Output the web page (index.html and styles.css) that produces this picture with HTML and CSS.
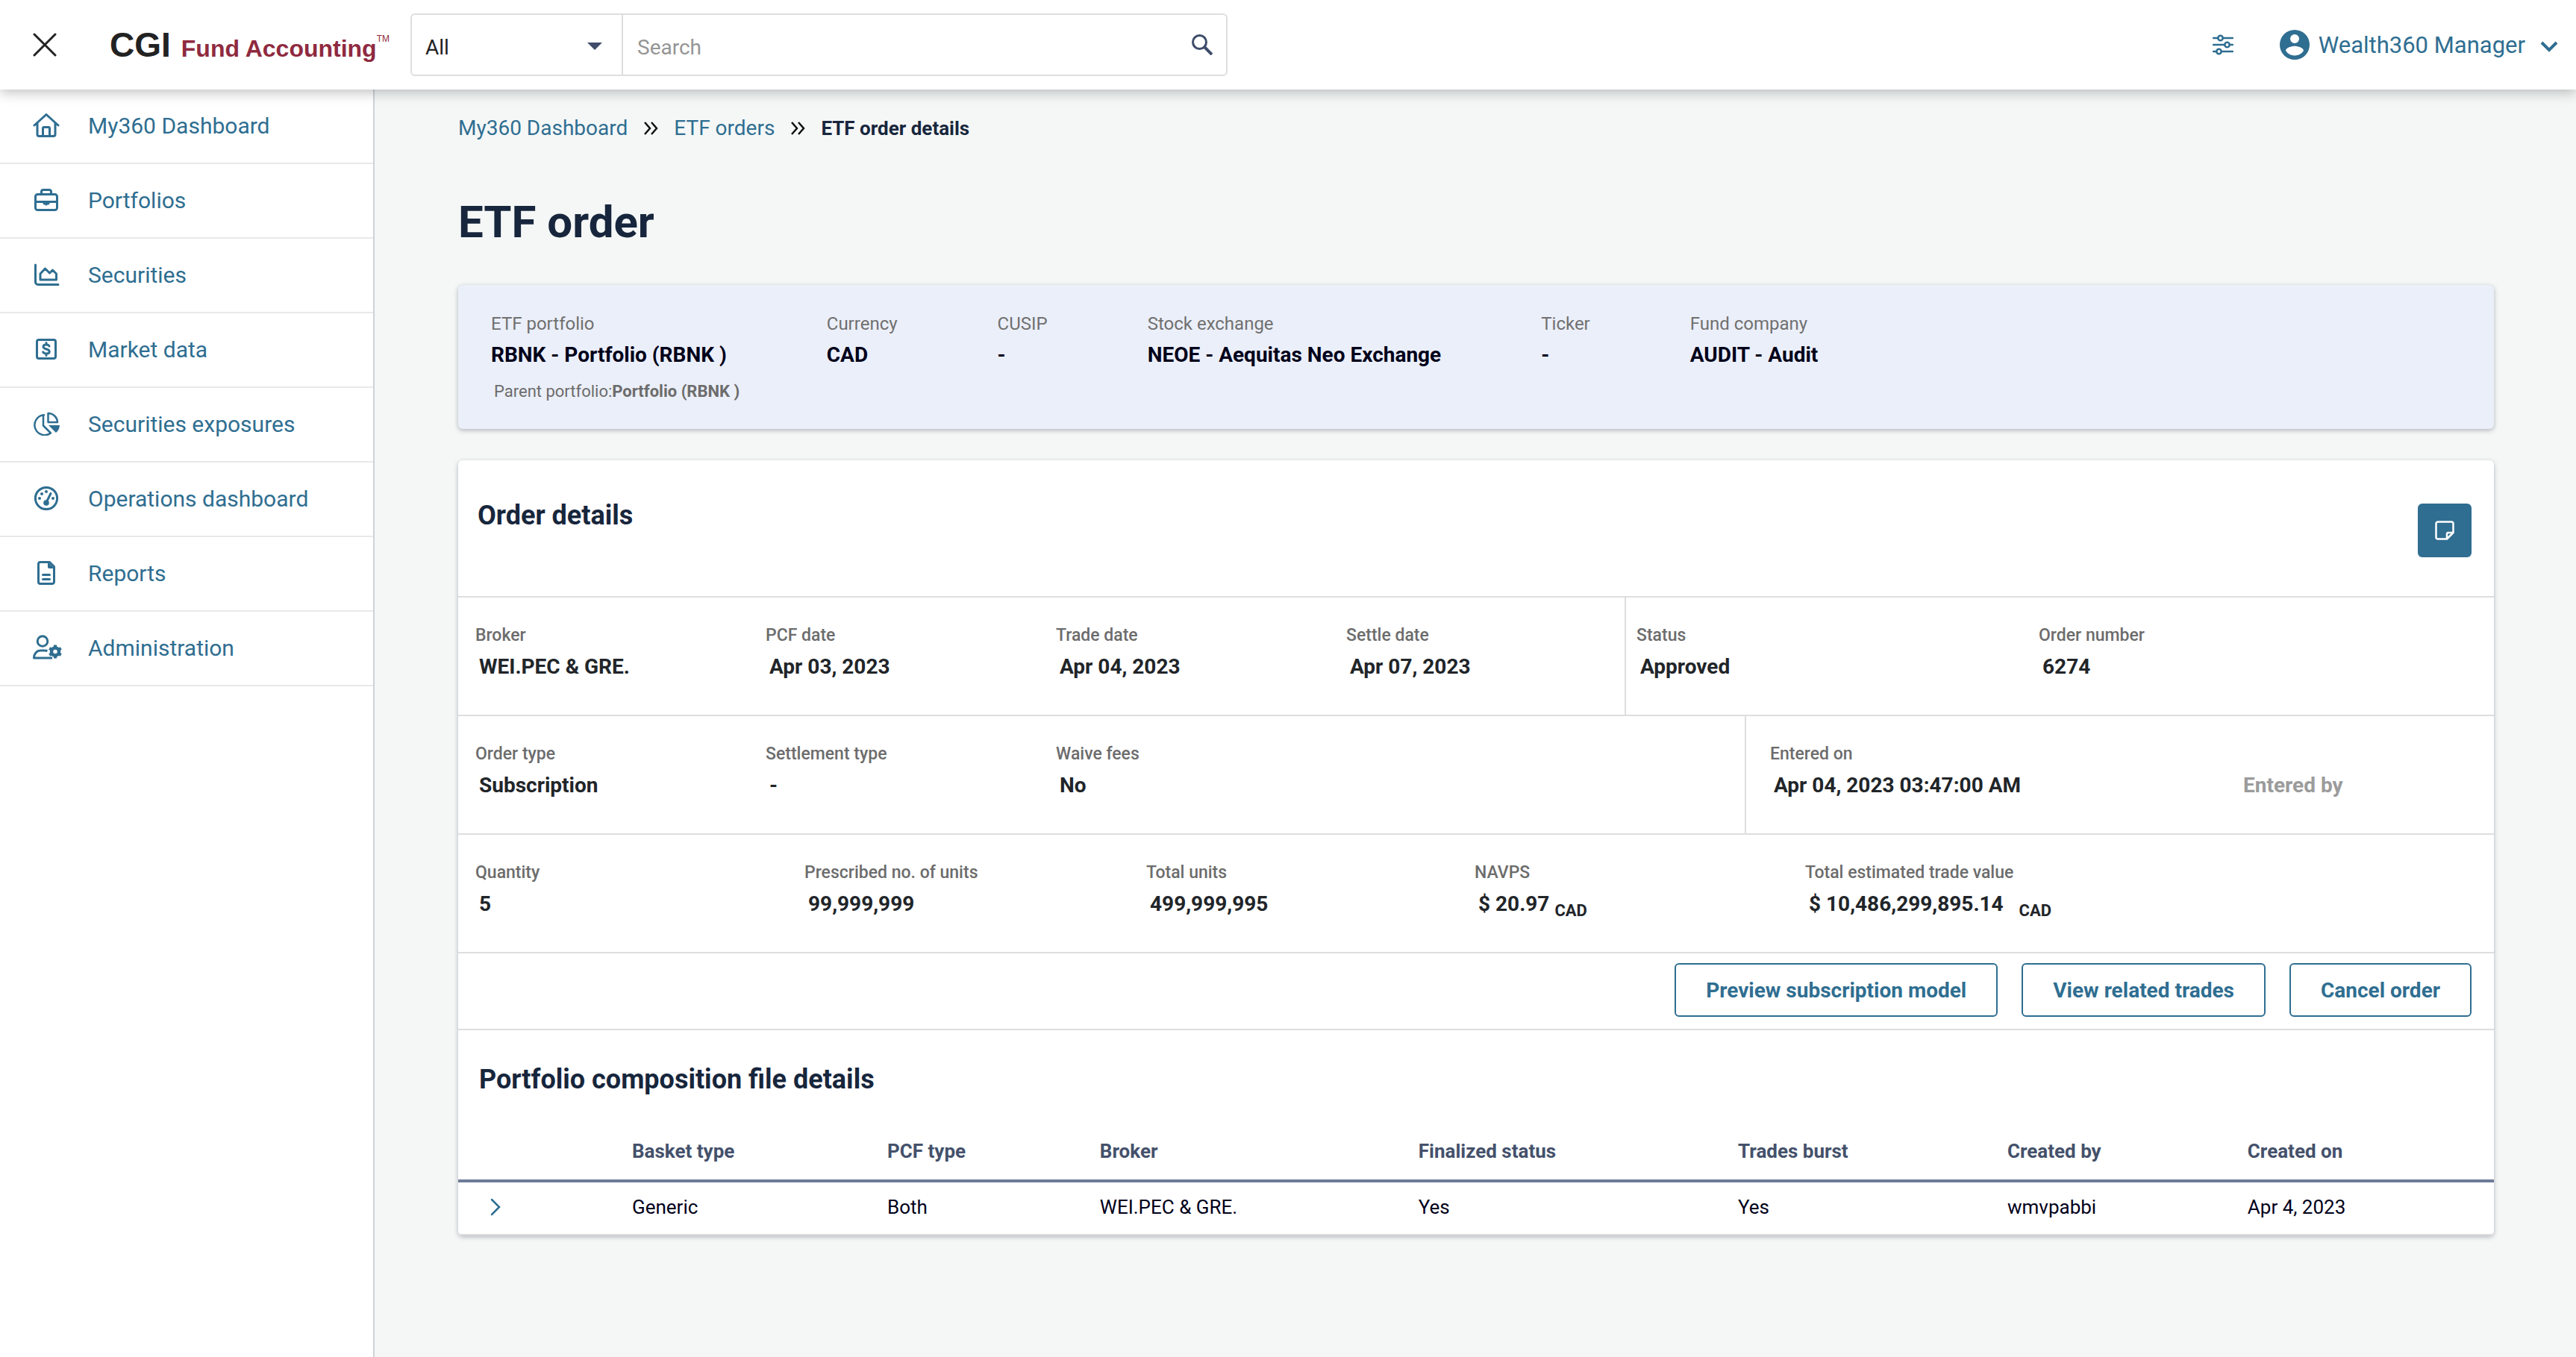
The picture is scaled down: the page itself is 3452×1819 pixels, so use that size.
FILE: index.html
```html
<!DOCTYPE html>
<html lang="en">
<head>
<meta charset="utf-8">
<title>ETF order details</title>
<link rel="stylesheet" href="styles.css">
</head>
<body>
<header class="topbar">
  <button class="icon-btn close" aria-label="Close menu">
    <svg width="32" height="32" viewBox="0 0 32 32"><path d="M2 2 30 30M30 2 2 30" stroke="#222" stroke-width="3" stroke-linecap="round"/></svg>
  </button>
  <a class="logo" href="#"><span class="logo-mark">CGI</span><span class="logo-name">Fund Accounting</span><span class="logo-tm">TM</span></a>
  <form class="search">
    <label class="scope">
      <select aria-label="Search scope"><option>All</option></select>
      <svg width="20" height="10" viewBox="0 0 20 10"><path d="M0 0h20L10 10z" fill="#3f4d6b"/></svg>
    </label>
    <input type="text" placeholder="Search" aria-label="Search">
    <button class="icon-btn" type="button" aria-label="Run search">
      <svg width="28" height="28" viewBox="0 0 28 28" fill="none" stroke="#3f4d6b"><circle cx="10.500" cy="10.500" r="9" stroke-width="3"/><path d="M17 17l10 10" stroke-width="4"/></svg>
    </button>
  </form>
  <button class="icon-btn settings" aria-label="Settings">
    <svg width="28" height="28" viewBox="0 0 28 28" fill="none" stroke="#2f6e91" stroke-width="2.500" stroke-linecap="round"><path d="M1 5h6M14 5h13M1 14h15M23 14h4M1 23h4M12 23h15"/><circle cx="10.500" cy="5" r="3.200"/><circle cx="19.500" cy="14" r="3.200"/><circle cx="8.500" cy="23" r="3.200"/></svg>
  </button>
  <button class="icon-btn user">
    <svg width="40" height="40" viewBox="0 0 24 24" fill="#2f6e91"><path d="M12 0a12 12 0 1 0 0 24 12 12 0 0 0 0-24zm0 3.600a3.600 3.600 0 1 1 0 7.200 3.600 3.600 0 0 1 0-7.200zm0 17.040a8.640 8.640 0 0 1-7.200-3.860c.04-2.390 4.800-3.700 7.200-3.700 2.390 0 7.160 1.310 7.200 3.700A8.640 8.640 0 0 1 12 20.640z"/></svg>
    <span>Wealth360 Manager</span>
    <svg width="24" height="20" viewBox="0 0 24 20" fill="none" stroke="#2f6e91" stroke-width="4"><path d="M2 7l10 10L22 7"/></svg>
  </button>
</header>
<div class="layout">
  <nav class="sidebar">
    <a href="#"><svg viewBox="0 0 36 32"><path d="M2 16 18 1.500 34 16M6 13v15a2.500 2.500 0 0 0 2.500 2.500h19A2.500 2.500 0 0 0 30 28V13M13.500 30V20a1.500 1.500 0 0 1 1.500-1.500h6a1.500 1.500 0 0 1 1.500 1.500v10"/></svg>My360 Dashboard</a>
    <a href="#"><svg viewBox="0 0 36 32"><rect x="3.500" y="8.500" width="29" height="21" rx="3"/><path d="M11.500 8V5a2.500 2.500 0 0 1 2.500-2.500h8A2.500 2.500 0 0 1 24.500 5v3M4 18.500h28M18 19v3" /><path d="M15.500 20.500h5" stroke-width="4"/></svg>Portfolios</a>
    <a href="#"><svg viewBox="0 0 36 32"><path d="M3.500 3v23a3.500 3.500 0 0 0 3.500 3.500h27M10 23v-8l6.500-7 6 6 4-4 5 5v8z"/></svg>Securities</a>
    <a href="#"><svg viewBox="0 0 36 32"><rect x="5.500" y="3.500" width="25" height="25" rx="2.500"/><path d="M22 12c-.6-1.500-2-2-4-2-2.400 0-4 1-4 2.800 0 4.200 8.200 2.200 8.200 6.400 0 1.800-1.700 2.800-4.200 2.800-2.200 0-3.700-.7-4.300-2.200M18 7.500v2.500M18 22v2.500"/></svg>Market data</a>
    <a href="#"><svg viewBox="0 0 36 32"><path d="M15 4.200A13.500 13.500 0 1 0 24 28.500L14 18.500V4.200zM20.500 2v12H33A12.500 12.500 0 0 0 20.500 2z" stroke-width="2.500"/><path d="M21 18h15a14 14 0 0 1-5 10z" fill="#2f6e91" stroke="none"/></svg>Securities exposures</a>
    <a href="#"><svg viewBox="0 0 36 32"><circle cx="18" cy="16" r="14.600"/><path d="M18 21.500 24 9.500"/><g fill="#2f6e91" stroke="none"><circle cx="18" cy="22" r="3.800"/><circle cx="9" cy="16" r="2"/><circle cx="12" cy="10" r="2"/><circle cx="18" cy="7" r="2"/><circle cx="27" cy="16" r="2"/></g></svg>Operations dashboard</a>
    <a href="#"><svg viewBox="0 0 36 32"><path d="M9.500 1.500h13l6 6v20.500a2.500 2.500 0 0 1-2.500 2.500H10A2.500 2.500 0 0 1 7.500 28V4a2.500 2.500 0 0 1 2.500-2.500zM13.500 18.500h9M13.500 24.500h9"/><path d="M20 1v7a2 2 0 0 0 2 2h7z" fill="#2f6e91" stroke="none"/></svg>Reports</a>
    <a href="#"><svg class="wide" viewBox="0 0 42 34"><circle cx="13" cy="8.500" r="6.800"/><path d="M26 31H1.500c0-5.500 3.500-10 9-10H16c1.500 0 2.500.2 3.500.6"/><circle cx="30" cy="22.500" r="5" stroke-width="4.500"/><path d="M30 13.500v18M22.200 18l15.600 9M37.800 18l-15.600 9" stroke-width="4" stroke-dasharray="3 12"/></svg>Administration</a>
  </nav>
  <main class="content">
    <nav class="crumbs" aria-label="Breadcrumb">
      <a href="#">My360 Dashboard</a>
      <svg width="20" height="18" viewBox="0 0 20 18"><path d="M2 1l7 8-7 8M11 1l7 8-7 8"/></svg>
      <a href="#">ETF orders</a>
      <svg width="20" height="18" viewBox="0 0 20 18"><path d="M2 1l7 8-7 8M11 1l7 8-7 8"/></svg>
      <strong>ETF order details</strong>
    </nav>
    <h1>ETF order</h1>
    <section class="summary">
      <dl class="summary-list">
        <div><dt>ETF portfolio</dt><dd>RBNK - Portfolio (RBNK )</dd></div>
        <div><dt>Currency</dt><dd>CAD</dd></div>
        <div><dt>CUSIP</dt><dd>-</dd></div>
        <div><dt>Stock exchange</dt><dd>NEOE - Aequitas Neo Exchange</dd></div>
        <div><dt>Ticker</dt><dd>-</dd></div>
        <div><dt>Fund company</dt><dd>AUDIT - Audit</dd></div>
      </dl>
      <p class="parent">Parent portfolio:<b>Portfolio (RBNK )</b></p>
    </section>
    <section class="card">
      <div class="card-head">
        <h2>Order details</h2>
        <button class="note" aria-label="Notes"><svg width="26" height="26" viewBox="0 0 26 26" fill="none" stroke="#fff" stroke-width="2.500" stroke-linejoin="round"><path d="M4 1.500h18A2.500 2.500 0 0 1 24.500 4v12l-8.500 8.500H4A2.500 2.500 0 0 1 1.500 22V4A2.500 2.500 0 0 1 4 1.500zM16 24v-6a2 2 0 0 1 2-2h6"/></svg></button>
      </div>
      <div class="row row-dates">
        <dl class="fields">
          <div><dt>Broker</dt><dd>WEI.PEC &amp; GRE.</dd></div>
          <div><dt>PCF date</dt><dd>Apr 03, 2023</dd></div>
          <div><dt>Trade date</dt><dd>Apr 04, 2023</dd></div>
          <div><dt>Settle date</dt><dd>Apr 07, 2023</dd></div>
        </dl>
        <dl class="fields side">
          <div><dt>Status</dt><dd>Approved</dd></div>
          <div><dt>Order number</dt><dd>6274</dd></div>
        </dl>
      </div>
      <div class="row row-type">
        <dl class="fields">
          <div><dt>Order type</dt><dd>Subscription</dd></div>
          <div><dt>Settlement type</dt><dd>-</dd></div>
          <div><dt>Waive fees</dt><dd>No</dd></div>
        </dl>
        <dl class="fields side">
          <div><dt>Entered on</dt><dd>Apr 04, 2023 03:47:00 AM</dd></div>
          <div class="empty"><dt>Entered by</dt></div>
        </dl>
      </div>
      <div class="row">
        <dl class="fields amounts">
          <div><dt>Quantity</dt><dd>5</dd></div>
          <div><dt>Prescribed no. of units</dt><dd>99,999,999</dd></div>
          <div><dt>Total units</dt><dd>499,999,995</dd></div>
          <div><dt>NAVPS</dt><dd>$ 20.97 <sub>CAD</sub></dd></div>
          <div><dt>Total estimated trade value</dt><dd>$ 10,486,299,895.14 &nbsp; <sub>CAD</sub></dd></div>
        </dl>
      </div>
      <div class="actions">
        <button>Preview subscription model</button>
        <button>View related trades</button>
        <button>Cancel order</button>
      </div>
      <h2 class="table-title">Portfolio composition file details</h2>
      <table>
        <colgroup><col class="c0"><col class="c1"><col class="c2"><col class="c3"><col class="c4"><col class="c5"><col class="c6"><col class="c7"></colgroup>
        <thead><tr><th></th><th>Basket type</th><th>PCF type</th><th>Broker</th><th>Finalized status</th><th>Trades burst</th><th>Created by</th><th>Created on</th></tr></thead>
        <tbody><tr>
          <td class="toggle"><button class="icon-btn" aria-label="Expand row"><svg width="14" height="24" viewBox="0 0 14 24" fill="none" stroke="#2f6e91" stroke-width="2.500" stroke-linecap="round"><path d="M2 2l10 10L2 22"/></svg></button></td>
          <td>Generic</td><td>Both</td><td>WEI.PEC &amp; GRE.</td><td>Yes</td><td>Yes</td><td>wmvpabbi</td><td>Apr 4, 2023</td>
        </tr></tbody>
      </table>
    </section>
  </main>
</div>
</body>
</html>
```
FILE: styles.css
```css
* { box-sizing: border-box; }
body {
  margin: 0;
  min-height: 100vh;
  display: flex;
  flex-direction: column;
  background: #f5f7f7;
  color: #212529;
  font-family: Roboto, "Liberation Sans", sans-serif;
  font-size: 28px;
}
a { color: #2f6e91; text-decoration: none; }
button, input, select { font: inherit; }
dl, dd, p, h1, h2 { margin: 0; }
svg { display: block; flex: none; }
.icon-btn { border: 0; background: none; padding: 0; color: #2f6e91; display: flex; align-items: center; }

/* Top bar */
.topbar {
  position: relative;
  z-index: 1;
  display: flex;
  align-items: center;
  height: 120px;
  padding: 0 24px 0 44px;
  background: #fff;
  box-shadow: 0 4px 16px rgba(0, 0, 0, .25);
}
.logo {
  display: flex;
  align-items: baseline;
  width: 403px;
  margin-left: 71px;
  font-family: "Liberation Sans", Arial, sans-serif;
  color: #8f2a40;
  white-space: nowrap;
}
.logo-mark { font-size: 46px; font-weight: 700; color: #222; margin-right: 14px; }
.logo-name { font-size: 32px; font-weight: 700; }
.logo-tm { font-size: 12px; line-height: 14px; align-self: flex-start; margin-top: 12px; }
.search {
  display: flex;
  align-items: center;
  width: 1095px;
  height: 84px;
  padding-right: 18px;
  border: 2px solid #dedede;
  border-radius: 6px;
}
.scope {
  display: flex;
  align-items: center;
  align-self: stretch;
  width: 283px;
  padding: 4px 26px 0 0;
  border-right: 2px solid #dedede;
}
.scope select { flex: 1; appearance: none; border: 0; background: none; padding: 2px 0 0 18px; color: #222; }
.search input { flex: 1; border: 0; background: none; outline: 0; padding: 6px 0 0 19px; }
.search input::placeholder { color: #959595; }
.settings { margin-left: auto; }
.user { margin-left: 62px; gap: 12px; font-size: 31px; }
.user span { margin-right: 8px; }

.layout { display: flex; flex: 1; }

/* Side menu */
.sidebar { width: 502px; border-right: 2px solid #cfd3d6; background: #fff; }
.sidebar a {
  display: flex;
  align-items: center;
  gap: 38px;
  height: 100px;
  padding: 0 0 2px 44px;
  border-bottom: 2px solid #e9e9e9;
  font-size: 30px;
}
.sidebar svg { width: 36px; height: 32px; fill: none; stroke: #2f6e91; stroke-width: 3; stroke-linejoin: round; stroke-linecap: round; }
.sidebar .wide { width: 42px; height: 34px; margin-right: -6px; stroke-linecap: butt; }

/* Page content */
.content { flex: 1; padding: 32px 110px 0 112px; }
.crumbs { display: flex; align-items: center; gap: 21px; line-height: 40px; }
.crumbs svg { fill: none; stroke: #111; stroke-width: 2.5; }
.crumbs strong { font-size: 26px; font-weight: 700; color: #17263c; }
h1 { margin-top: 66px; font-size: 60px; line-height: 80px; font-weight: 700; color: #17263c; }
h2 { font-size: 36px; line-height: 44px; font-weight: 700; color: #17263c; }

.summary, .card { border-radius: 6px; box-shadow: 0 2px 6px rgba(20, 30, 50, .3); }
.summary { margin-top: 44px; padding: 36px 44px 34px; background: #ebeff9; color: #00001a; }
.summary-list { display: flex; gap: 134px; }
.summary dt { font-size: 24px; line-height: 32px; color: #707070; }
.summary dd { line-height: 44px; font-weight: 700; padding-top: 4px; }
.parent { padding: 11px 4px 0; font-size: 22px; line-height: 32px; color: #6c6c6c; }

.card { margin-top: 42px; background: #fff; }
.card-head { display: flex; justify-content: space-between; align-items: flex-start; height: 182px; padding: 52px 30px 0 26px; }
.note { display: flex; align-items: center; justify-content: center; width: 72px; height: 72px; margin-top: 6px; border: 0; border-radius: 6px; background: #2f6e91; }

.row { display: grid; height: 159px; border-top: 2px solid #dedede; }
.row-dates { grid-template-columns: 1563fr 1165fr; }
.row-type { grid-template-columns: 1724fr 1004fr; }
.fields { display: grid; align-content: start; padding: 35px 0 0 23px; }
.fields dt { font-size: 23px; line-height: 32px; font-weight: 500; color: #6c6c6c; }
.fields dd { padding: 6px 5px 0; line-height: 40px; font-weight: 700; }
.side { border-left: 2px solid #dedede; }
.row-dates .fields { grid-template-columns: 389fr 389fr 389fr 373fr; }
.row-dates .side { padding-left: 14px; grid-template-columns: 539fr 610fr; }
.row-type .fields { grid-template-columns: 389fr 389fr 923fr; }
.row-type .side { padding-left: 32px; grid-template-columns: 634fr 336fr; }
.amounts { grid-template-columns: 441fr 458fr 440fr 443fr 923fr; }
.fields .empty dt { padding-top: 38px; font-size: 28px; line-height: 40px; font-weight: 700; color: #9b9b9b; }
sub { font-size: 22px; line-height: 0; }

.actions { display: flex; justify-content: flex-end; gap: 32px; height: 103px; padding: 13px 30px 0; border-top: 2px solid #dedede; }
.actions button { height: 72px; padding: 0 40px; border: 2px solid #2f6e91; border-radius: 6px; background: #fff; color: #2f6e91; font-weight: 700; }

.table-title { padding: 44px 28px 0; border-top: 2px solid #dedede; }
table { width: 100%; margin-top: 36px; border-collapse: collapse; table-layout: fixed; font-size: 26px; }
th, td { padding: 0; text-align: left; }
th { height: 78px; font-weight: 700; color: #44516b; border-bottom: 4px solid #6d7b97; }
td { height: 72px; padding-bottom: 3px; color: #00001a; border-bottom: 2px solid #dedede; }
.toggle { padding-left: 43px; }
.c0 { width: 8.54%; }
.c1 { width: 12.54%; }
.c2 { width: 10.44%; }
.c3 { width: 15.65%; }
.c4 { width: 15.7%; }
.c5 { width: 13.23%; }
.c6 { width: 11.8%; }
.c7 { width: 12.1%; }
```
